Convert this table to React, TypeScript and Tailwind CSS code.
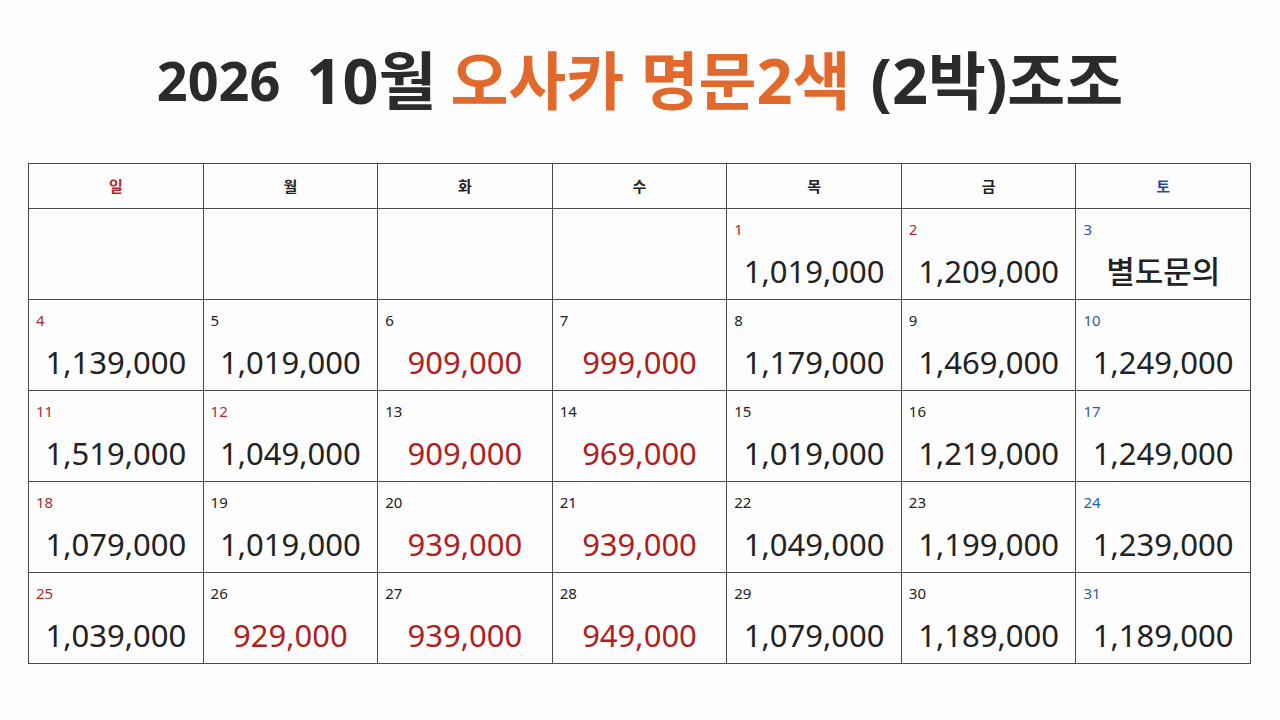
const font = { fontFamily: '"Noto Sans", "Noto Sans CJK KR", sans-serif' }

type Cell = { day?: number; price?: string; dayColor?: string; priceColor?: string; bold?: boolean }

const RED = 'text-[#ad2d2f]'
const BLUE = 'text-[#2a5ea8]'
const PRICE_RED = 'text-[#b01e1e]'

const headers = [
    { label: '일', color: 'text-[#b3262a]' },
    { label: '월', color: 'text-[#222]' },
    { label: '화', color: 'text-[#222]' },
    { label: '수', color: 'text-[#222]' },
    { label: '목', color: 'text-[#222]' },
    { label: '금', color: 'text-[#222]' },
    { label: '토', color: 'text-[#1f4f9a]' },
]

const rows: Cell[][] = [
    [
        {}, {}, {}, {},
        { day: 1, price: '1,019,000', dayColor: RED },
        { day: 2, price: '1,209,000', dayColor: RED },
        { day: 3, price: '별도문의', dayColor: BLUE, bold: true },
    ],
    [
        { day: 4, price: '1,139,000', dayColor: RED },
        { day: 5, price: '1,019,000' },
        { day: 6, price: '909,000', priceColor: PRICE_RED },
        { day: 7, price: '999,000', priceColor: PRICE_RED },
        { day: 8, price: '1,179,000' },
        { day: 9, price: '1,469,000' },
        { day: 10, price: '1,249,000', dayColor: BLUE },
    ],
    [
        { day: 11, price: '1,519,000', dayColor: RED },
        { day: 12, price: '1,049,000', dayColor: RED },
        { day: 13, price: '909,000', priceColor: PRICE_RED },
        { day: 14, price: '969,000', priceColor: PRICE_RED },
        { day: 15, price: '1,019,000' },
        { day: 16, price: '1,219,000' },
        { day: 17, price: '1,249,000', dayColor: BLUE },
    ],
    [
        { day: 18, price: '1,079,000', dayColor: RED },
        { day: 19, price: '1,019,000' },
        { day: 20, price: '939,000', priceColor: PRICE_RED },
        { day: 21, price: '939,000', priceColor: PRICE_RED },
        { day: 22, price: '1,049,000' },
        { day: 23, price: '1,199,000' },
        { day: 24, price: '1,239,000', dayColor: BLUE },
    ],
    [
        { day: 25, price: '1,039,000', dayColor: RED },
        { day: 26, price: '929,000', priceColor: PRICE_RED },
        { day: 27, price: '939,000', priceColor: PRICE_RED },
        { day: 28, price: '949,000', priceColor: PRICE_RED },
        { day: 29, price: '1,079,000' },
        { day: 30, price: '1,189,000' },
        { day: 31, price: '1,189,000', dayColor: BLUE },
    ],
]

export default function App() {
    return (
        <div className="w-[1280px] h-[720px] bg-[#fdfdfd] flex flex-col" style={font}>
            {/* Title */}
            <div className="h-[163px] flex items-center justify-center font-bold text-[#2b2b2b] pb-1">
                <span className="text-[54px] leading-none">2026</span>
                <span className="text-[63px] leading-none ml-[26px]">10월</span>
                <span className="text-[63px] leading-none ml-[14px] text-[#e0692b]">오사카 명문2색</span>
                <span className="text-[63px] leading-none ml-[20px]">(2박)조조</span>
            </div>

            {/* Calendar */}
            <div className="ml-[28px] w-[1223px] border-l border-t border-[#4a4a4a] grid grid-cols-7">
                {headers.map((h) => (
                    <div
                        key={h.label}
                        className={`h-[45px] border-r border-b border-[#4a4a4a] flex items-center justify-center text-[15px] font-bold ${h.color}`}
                    >
                        {h.label}
                    </div>
                ))}
                {rows.flat().map((c, i) => (
                    <div key={i} className="h-[91px] border-r border-b border-[#4a4a4a] flex flex-col px-[7px] pt-[10px]">
                        <div className={`text-[15px] leading-[20px] h-[20px] ${c.dayColor ?? 'text-[#222]'}`}>
                            {c.day ?? ''}
                        </div>
                        <div
                            className={`flex-1 flex items-center justify-center pt-[5px] text-[31px] leading-none ${c.bold ? 'font-medium' : ''} ${c.priceColor ?? 'text-[#222]'}`}
                        >
                            {c.price}
                        </div>
                    </div>
                ))}
            </div>
        </div>
    )
}
